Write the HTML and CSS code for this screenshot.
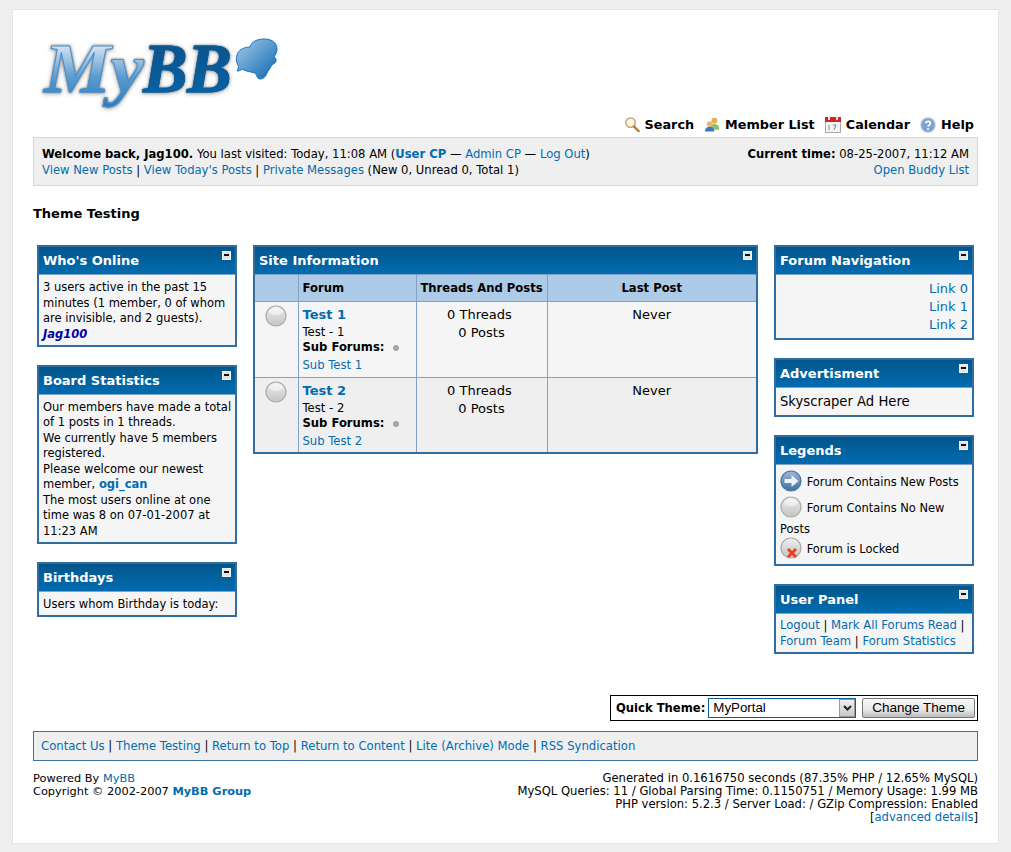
FILE: index.html
```html
<!DOCTYPE html>
<html lang="en">
<head>
<meta charset="utf-8">
<title>Theme Testing</title>
<link rel="stylesheet" href="styles.css">
</head>
<body>
<svg class="defs" width="0" height="0" aria-hidden="true">
  <defs>
    <linearGradient id="orb" x1="0" y1="0" x2="0" y2="1"><stop offset="0" stop-color="#f2f2f2"/><stop offset=".5" stop-color="#d8d8d8"/><stop offset="1" stop-color="#c4c4c4"/></linearGradient>
    <linearGradient id="orbn" x1="0" y1="0" x2="0" y2="1"><stop offset="0" stop-color="#9db9d6"/><stop offset="1" stop-color="#3f6f9f"/></linearGradient>
    <linearGradient id="bub" x1="0" y1="0" x2="1" y2="1"><stop offset="0" stop-color="#a9cbe6"/><stop offset=".55" stop-color="#4f94cc"/><stop offset="1" stop-color="#0f65ab"/></linearGradient>
    <symbol id="off" viewBox="0 0 22 22"><circle cx="11" cy="11" r="10" fill="url(#orb)" stroke="#a9a9a9" stroke-width="1.2"/><ellipse cx="11" cy="6.5" rx="7" ry="3.5" fill="#fff" opacity=".45"/></symbol>
    <symbol id="on" viewBox="0 0 22 22"><circle cx="11" cy="11" r="10" fill="url(#orbn)" stroke="#4a74a0" stroke-width="1.2"/><path d="M4.5 9h7V5l7 6-7 6v-4h-7z" fill="#eef3f8"/></symbol>
    <symbol id="locked" viewBox="0 0 22 22"><circle cx="11" cy="11" r="10" fill="url(#orb)" stroke="#a9a9a9" stroke-width="1.2"/><path d="M9 11l3 3 3-3 2 2-3 3 3 3-2 2-3-3-3 3-2-2 3-3-3-3z" fill="#e8401c"/></symbol>
  </defs>
</svg>
<div class="container">
  <header class="head">
    <div class="logo">
      <span class="logo-my">My</span><span class="logo-bb">BB</span>
      <svg class="logo-bubble" width="44" height="44" viewBox="0 0 44 44"><path d="M2 17C3 12 9 9 15 9 16 4 22 1 29 1 36 1 42 4 42 11 42 15 40 17 39 19 42 20 42 25 38 26 36 27 36 30 33 33 31 38 29 41 25 41 22 41 22 37 20 35 16 34 10 33 7 31 5 33 3 33 2 33 3 31 4 29 3 27 1 24 1 20 2 17Z" fill="url(#bub)" stroke="#1a72b8"/></svg>
    </div>
    <nav class="menu">
      <a class="menu-item" href="#"><svg width="16" height="17" viewBox="0 0 17 17"><circle cx="7" cy="6.5" r="5" fill="#fbfaf0" stroke="#c9a36b" stroke-width="1.6"/><path d="M10.5 10.5l5 5" stroke="#b5793a" stroke-width="2.4" stroke-linecap="round"/></svg>Search</a>
      <a class="menu-item" href="#"><svg width="16" height="17" viewBox="0 0 17 17"><circle cx="11" cy="4.5" r="3.2" fill="#e8b04e"/><path d="M7 12c0-3 2-4 4-4s5 1 5 4v2H7z" fill="#8fbf6a"/><circle cx="6" cy="8" r="3" fill="#eab27a"/><path d="M1 16c0-3 2-5 5-5s5 2 5 5z" fill="#3f78c0"/></svg>Member List</a>
      <a class="menu-item" href="#"><svg width="16" height="17" viewBox="0 0 16 17"><rect x=".5" y="1.5" width="15" height="15" fill="#f3f3f3" stroke="#aaa"/><rect x="0" y="1" width="16" height="5" fill="#d9231f"/><rect x="3" y="0" width="2" height="4" fill="#eee"/><rect x="11" y="0" width="2" height="4" fill="#eee"/><path d="M4 9v5M8 9h3l-2 5" fill="none" stroke="#888"/></svg>Calendar</a>
      <a class="menu-item" href="#"><svg width="16" height="16" viewBox="0 0 16 16"><circle cx="8" cy="8" r="7" fill="#7f9fd0" stroke="#a9bedd" stroke-width="1.4"/><path d="M5.8 6.2C6 3.8 10.4 3.8 10.4 6.2 10.4 8 8 8 8 9.8" fill="none" stroke="#fff" stroke-width="1.7"/><circle cx="8" cy="12" r="1.1" fill="#fff"/></svg>Help</a>
    </nav>
    <div class="panel">
      <div class="panel-right">
        <div><b>Current time:</b> 08-25-2007, 11:12 AM</div>
        <div><a href="#">Open Buddy List</a></div>
      </div>
      <div>
        <div><b>Welcome back, Jag100.</b> You last visited: Today, 11:08 AM (<a href="#"><b>User CP</b></a> — <a href="#">Admin CP</a> — <a href="#">Log Out</a>)</div>
        <div><a href="#">View New Posts</a> | <a href="#">View Today's Posts</a> | <a href="#">Private Messages</a> (New 0, Unread 0, Total 1)</div>
      </div>
    </div>
  </header>

  <h1 class="page-title">Theme Testing</h1>

  <main class="columns">
    <aside class="col">
      <section class="box">
        <div class="thead">Who's Online<span class="collapse"></span></div>
        <div class="tbody side">3 users active in the past 15 minutes (1 member, 0 of whom are invisible, and 2 guests).<br><a class="online" href="#">Jag100</a></div>
      </section>
      <section class="box">
        <div class="thead">Board Statistics<span class="collapse"></span></div>
        <div class="tbody side">Our members have made a total of 1 posts in 1 threads.<br>We currently have 5 members registered.<br>Please welcome our newest member, <a href="#"><b>ogi_can</b></a><br>The most users online at one time was 8 on 07-01-2007 at 11:23 AM</div>
      </section>
      <section class="box">
        <div class="thead">Birthdays<span class="collapse"></span></div>
        <div class="tbody side">Users whom Birthday is today:</div>
      </section>
    </aside>

    <section class="middle">
      <div class="box box-wide">
        <div class="thead">Site Information<span class="collapse"></span></div>
        <table class="forums">
          <thead>
            <tr><th class="c-icon"></th><th class="c-forum">Forum</th><th class="c-stats">Threads And Posts</th><th>Last Post</th></tr>
          </thead>
          <tbody>
            <tr class="row1">
              <td class="cell-icon"><svg width="22" height="22"><use href="#off"/></svg></td>
              <td class="cell-forum"><a class="forum-link" href="#">Test 1</a><div class="desc">Test - 1</div><div class="subs"><b>Sub Forums:</b><span class="dot"></span></div><div class="sublink"><a href="#">Sub Test 1</a></div></td>
              <td class="cell-num">0 Threads&nbsp;<br>0 Posts</td>
              <td class="cell-num">Never</td>
            </tr>
            <tr class="row2">
              <td class="cell-icon"><svg width="22" height="22"><use href="#off"/></svg></td>
              <td class="cell-forum"><a class="forum-link" href="#">Test 2</a><div class="desc">Test - 2</div><div class="subs"><b>Sub Forums:</b><span class="dot"></span></div><div class="sublink"><a href="#">Sub Test 2</a></div></td>
              <td class="cell-num">0 Threads&nbsp;<br>0 Posts</td>
              <td class="cell-num">Never</td>
            </tr>
          </tbody>
        </table>
      </div>
    </section>

    <aside class="col">
      <section class="box">
        <div class="thead">Forum Navigation<span class="collapse"></span></div>
        <div class="tbody nav-links"><a href="#">Link 0</a><a href="#">Link 1</a><a href="#">Link 2</a></div>
      </section>
      <section class="box">
        <div class="thead">Advertisment<span class="collapse"></span></div>
        <div class="tbody ad">Skyscraper Ad Here</div>
      </section>
      <section class="box">
        <div class="thead">Legends<span class="collapse"></span></div>
        <div class="tbody legends">
          <svg width="22" height="22"><use href="#on"/></svg> Forum Contains New Posts<br>
          <svg width="22" height="22"><use href="#off"/></svg> Forum Contains No New Posts<br>
          <svg width="22" height="22"><use href="#locked"/></svg> Forum is Locked
        </div>
      </section>
      <section class="box">
        <div class="thead">User Panel<span class="collapse"></span></div>
        <div class="tbody panel-links"><a href="#">Logout</a> | <a href="#">Mark All Forums Read</a> | <a href="#">Forum Team</a> | <a href="#">Forum Statistics</a></div>
      </section>
    </aside>
  </main>

  <div class="theme-row">
    <form class="quick-theme">
      <label for="theme">Quick Theme:</label>
      <span class="select-wrap">
        <select id="theme" class="select"><option>MyPortal</option></select>
        <span class="select-arrow"><svg width="9" height="6" viewBox="0 0 9 6"><path d="M1 1l3.5 3.5L8 1" fill="none" stroke="#222" stroke-width="2"/></svg></span>
      </span>
      <button class="button" type="button">Change Theme</button>
    </form>
  </div>

  <nav class="bottom-links"><a href="#">Contact Us</a> | <a href="#">Theme Testing</a> | <a href="#">Return to Top</a> | <a href="#">Return to Content</a> | <a href="#">Lite (Archive) Mode</a> | <a href="#">RSS Syndication</a></nav>

  <footer class="footer">
    <div class="debug">Generated in 0.1616750 seconds (87.35% PHP / 12.65% MySQL)<br>MySQL Queries: 11 / Global Parsing Time: 0.1150751 / Memory Usage: 1.99 MB<br>PHP version: 5.2.3 / Server Load: / GZip Compression: Enabled<br>[<a href="#">advanced details</a>]</div>
    <div class="powered">Powered By <a href="#">MyBB</a><br>Copyright © 2002-2007 <a href="#"><b>MyBB Group</b></a></div>
  </footer>
</div>
</body>
</html>
```

FILE: styles.css
```css
* { box-sizing: border-box; }
html, body { margin: 0; padding: 0; }
body {
  background: #efefef;
  color: #000;
  font: 11.6px/13px "DejaVu Sans", Verdana, sans-serif;
  padding: 9px 12px 9px 12px;
}
a { color: #026cb1; text-decoration: none; }
.defs { position: absolute; }

.container {
  background: #fff;
  border: 1px solid #e4e4e4;
  height: 835px;
  padding: 0 20px;
}

.head { position: relative; }
.logo {
  position: relative;
  height: 94px;
  padding: 27px 0 0 11px;
  font: italic bold 70px/64px "Liberation Serif", serif;
  white-space: nowrap;
}
.logo-my, .logo-bb {
  display: inline-block;
  -webkit-background-clip: text;
  background-clip: text;
  color: transparent;
  padding: 0 6px 16px 0;
  filter: drop-shadow(0 0 1px #888) drop-shadow(0 1px 2px #bbb);
}
.logo-my {
  background-image: linear-gradient(#cfe1f1 12%, #5b9ccf 50%, #2c7cbe 85%);
  -webkit-text-stroke: 1px #4a8fc8;
  transform: scaleX(1.07);
  transform-origin: left;
}
.logo-bb {
  background-image: linear-gradient(#0a568e 15%, #0a5c9b 50%, #0169b2 85%);
  -webkit-text-stroke: 1px #0a5c9b;
  transform: scaleX(.95);
  transform-origin: left;
}
.logo-bubble { position: absolute; left: 202px; top: 28px; }

.menu {
  display: flex;
  justify-content: flex-end;
  gap: 10px;
  padding-right: 4px;
  height: 33px;
  align-items: flex-end;
  padding-bottom: 4px;
}
.menu-item {
  display: flex;
  align-items: center;
  gap: 5px;
  color: #000;
  font-weight: bold;
  font-size: 12.8px;
  line-height: 16px;
}

.panel {
  background: #efefef;
  border: 1px solid #d5d5d5;
  padding: 8px 8px 0;
  height: 49px;
  line-height: 16px;
}
.panel-right { float: right; text-align: right; }

.page-title {
  margin: 20px 0 0;
  font-size: 13px;
  line-height: 16px;
  font-weight: bold;
}

.columns {
  display: flex;
  gap: 16px;
  margin: 23px 4px 0;
  height: 450px;
}
.col { width: 200px; flex: none; display: flex; flex-direction: column; gap: 18px; }
.middle { flex: 1; }

.box { background: #f5f5f5; border: 2px solid #2f6da3; }
.thead {
  position: relative;
  height: 28px;
  padding: 6px 4px 0;
  background: linear-gradient(#02568a, #026cb1);
  color: #fff;
  font-weight: bold;
  font-size: 13px;
  line-height: 16px;
  border-bottom: 1px solid #81a2c4;
}
.collapse {
  position: absolute;
  right: 4px;
  top: 4px;
  width: 9px;
  height: 9px;
  background: #e4e4e4;
  border: 1px solid #f4f4f4;
}
.collapse::after {
  content: "";
  position: absolute;
  left: 1px;
  right: 1px;
  top: 2px;
  height: 2px;
  background: #111;
}
.tbody { padding: 4px; line-height: 15.5px; }
.tbody.side { font-size: 11.5px; padding: 5px 2px 2.5px 4px; }
.online { color: #00a; font-weight: bold; font-style: italic; }

.forums { width: 100%; border-collapse: collapse; table-layout: fixed; }
.forums th {
  background: #adcbe7;
  line-height: 16px;
  height: 26px;
  padding: 0 2px;
  text-align: center;
  border-right: 1px solid #81a2c4;
}
.forums th:last-child, .forums td:last-child { border-right: 0; }
.forums th.c-forum { text-align: left; padding-left: 4px; }
.c-icon { width: 43px; }
.c-forum { width: 118px; }
.c-stats { width: 131px; }
.forums td { vertical-align: top; border-right: 1px solid #81a2c4; border-top: 1px solid #81a2c4; padding: 4px; }
.row1 td { background: #f5f5f5; height: 76px; }
.row2 td { background: #efefef; height: 75px; }
.forums .cell-icon { text-align: center; padding-top: 3px; }
.forums .cell-forum { line-height: 15.4px; padding: 4px 4px 2px; }
.forum-link { font-size: 13px; font-weight: bold; line-height: 18px; display: block; }
.desc { margin-top: 1px; }
.subs { display: flex; align-items: center; }
.dot { width: 6px; height: 6px; margin-left: 9px; margin-top: 1px; border-radius: 50%; background: #aaa; border: 1px solid #999; }
.sublink { margin-top: 3px; }
.forums .cell-num { text-align: center; font-size: 13px; line-height: 18px; padding: 4px 4px 3px; }

.nav-links { display: flex; flex-direction: column; align-items: flex-end; font-size: 13px; line-height: 18px; padding: 5px 4px 4px; }
.ad { font-size: 13.2px; line-height: 18px; padding: 5px 4px 4px; }
.legends { font-size: 11.45px; line-height: 15.4px; padding: 5px 4px 1px; }
.legends svg { vertical-align: -10px; margin: 0 1px 4px 0; }
.panel-links { line-height: 16px; padding: 3px 4px 3px; }

.theme-row { display: flex; justify-content: flex-end; }
.quick-theme {
  display: flex;
  align-items: center;
  width: 368px;
  height: 26px;
  border: 1px solid #000;
  padding: 0 2px 0 5px;
  background: #fff;
}
.quick-theme label { font-weight: bold; margin-right: 3px; white-space: nowrap; }
.select-wrap { position: relative; display: block; }
.select {
  appearance: none;
  -webkit-appearance: none;
  display: block;
  width: 148px;
  height: 20px;
  border: 1px solid #0f5f94;
  border-radius: 0;
  background: #fff;
  padding: 0 4px;
  font: 13.3px/18px "Liberation Sans", Arial, sans-serif;
  color: #000;
}
.select-arrow {
  position: absolute;
  right: 1px;
  top: 1px;
  bottom: 1px;
  width: 16px;
  display: flex;
  align-items: center;
  justify-content: center;
  background: linear-gradient(#f0f0f0, #c8c8c8);
  border: 1px solid #999;
}
.button {
  margin-left: 6px;
  width: 113px;
  height: 20px;
  padding: 0;
  border: 1px solid #777;
  border-radius: 2px;
  background: linear-gradient(#f8f8f8, #e8e8e8 60%, #bbb);
  font: 13.5px/16px "Liberation Sans", Arial, sans-serif;
  color: #000;
}

.bottom-links {
  margin-top: 10px;
  height: 30px;
  background: #efefef;
  border: 1px solid #3f72a3;
  padding: 8px 7px 0;
  color: #000;
  font-size: 11.65px;
}
.footer { margin-top: 11px; }
.debug { float: right; text-align: right; }
.powered { font-size: 11.35px; }
```
